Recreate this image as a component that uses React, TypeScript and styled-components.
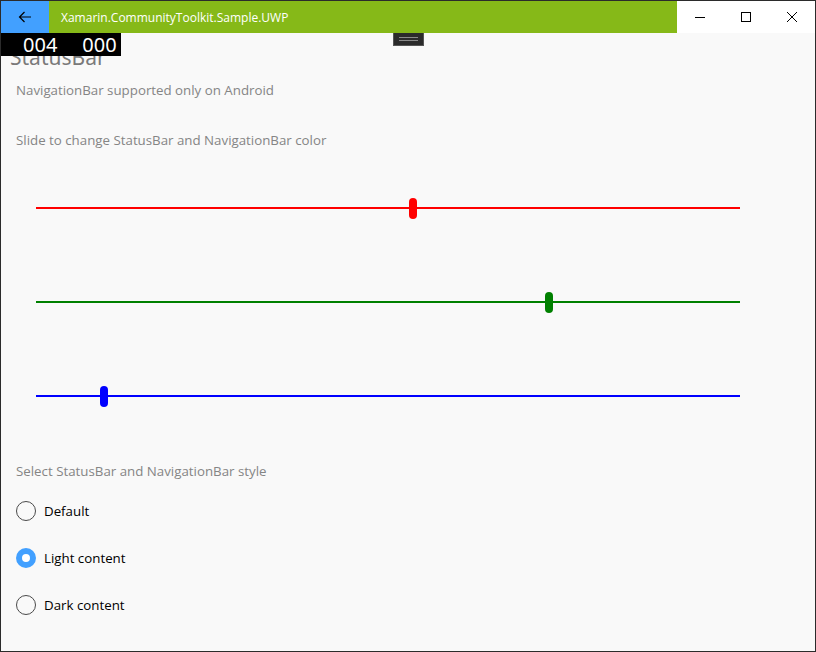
import React from "react";
import styled, { createGlobalStyle } from "styled-components";

const GlobalStyle = createGlobalStyle`
  html, body {
    margin: 0;
    padding: 0;
    background: #2b2b2b;
  }
  * {
    box-sizing: border-box;
  }
`;

const Window = styled.div`
  width: 816px;
  height: 652px;
  border: 1px solid #2b2b2b;
  display: flex;
  flex-direction: column;
  background: #f9f9f9;
  font-family: "Open Sans", "Noto Sans", sans-serif;
  overflow: hidden;
`;

const TitleBar = styled.div`
  height: 32px;
  display: flex;
  flex-shrink: 0;
`;

const BackButton = styled.div`
  width: 48px;
  background: #42a0ff;
  display: flex;
  align-items: center;
  justify-content: center;
`;

const TitleArea = styled.div`
  flex: 1;
  background: #86b918;
  color: #ffffff;
  font-size: 12px;
  display: flex;
  align-items: center;
  padding-left: 12px;
`;

const Controls = styled.div`
  width: 138px;
  background: #ffffff;
  display: flex;
`;

const ControlButton = styled.div`
  width: 46px;
  display: flex;
  align-items: center;
  justify-content: center;
`;

const Content = styled.div`
  position: relative;
  flex: 1;
  padding: 0 15px;
  display: flex;
  flex-direction: column;
`;

const FrameCounter = styled.div`
  position: absolute;
  top: 0;
  left: -1px;
  width: 121px;
  height: 23px;
  background: #000000;
  color: #ffffff;
  font-family: "Noto Sans", sans-serif;
  font-size: 20px;
  line-height: 23px;
  display: flex;
  gap: 25px;
  padding-left: 23px;
  z-index: 2;
`;

const Grabber = styled.div`
  position: absolute;
  top: 0;
  left: 392px;
  width: 31px;
  height: 13px;
  background: #2b2b2b;
  border: 1px solid #555555;
  border-top: none;
  display: flex;
  flex-direction: column;
  justify-content: center;
  gap: 2px;
  padding: 0 5px;

  span {
    display: block;
    height: 1px;
    background: #8a8a8a;
  }
`;

const PageTitle = styled.div`
  margin-left: -6px;
  margin-top: 10px;
  font-size: 21px;
  line-height: 28px;
  color: #7a7a7a;
  font-family: "Noto Sans", sans-serif;
`;

const Caption = styled.div<{ $gap: number }>`
  margin-top: ${(p) => p.$gap}px;
  font-size: 13.3px;
  line-height: 20px;
  color: #858585;
`;

const SliderList = styled.div`
  margin-top: 11px;
  display: flex;
  flex-direction: column;
`;

const SliderRow = styled.div`
  height: 94px;
  display: flex;
  align-items: center;
  padding-left: 20px;
`;

const Track = styled.div<{ $color: string }>`
  position: relative;
  width: 704px;
  height: 2px;
  background: ${(p) => p.$color};
`;

const Thumb = styled.div<{ $color: string }>`
  position: absolute;
  top: -9px;
  width: 8px;
  height: 21px;
  margin-left: -4px;
  border-radius: 4px;
  background: ${(p) => p.$color};
`;

const RadioList = styled.div`
  margin-top: 6px;
  display: flex;
  flex-direction: column;
`;

const RadioRow = styled.div`
  height: 47px;
  display: flex;
  align-items: center;
  gap: 8px;
`;

const RadioCircle = styled.div<{ $checked: boolean }>`
  width: 20px;
  height: 20px;
  border-radius: 50%;
  border: ${(p) => (p.$checked ? "6px solid #42a0ff" : "1.5px solid #4a4a4a")};
  background: ${(p) => (p.$checked ? "#ffffff" : "transparent")};
`;

const RadioLabel = styled.span`
  font-size: 13.3px;
  color: #000000;
`;

const sliders = [
  { color: "#ff0000", value: 0.535 },
  { color: "#008000", value: 0.728 },
  { color: "#0000ff", value: 0.096 },
];

const options = [
  { label: "Default", checked: false },
  { label: "Light content", checked: true },
  { label: "Dark content", checked: false },
];

export default function App() {
  return (
    <>
      <GlobalStyle />
      <Window>
        <TitleBar>
          <BackButton>
            <svg width="14" height="12" viewBox="0 0 14 12">
              <path d="M13 6H1.5M6.5 1L1.5 6l5 5" stroke="#000" strokeWidth="1.2" fill="none" />
            </svg>
          </BackButton>
          <TitleArea>Xamarin.CommunityToolkit.Sample.UWP</TitleArea>
          <Controls>
            <ControlButton>
              <svg width="10" height="10" viewBox="0 0 10 10">
                <path d="M0 5.5h10" stroke="#000" strokeWidth="1" />
              </svg>
            </ControlButton>
            <ControlButton>
              <svg width="10" height="10" viewBox="0 0 10 10">
                <rect x="0.5" y="0.5" width="9" height="9" stroke="#000" strokeWidth="1" fill="none" />
              </svg>
            </ControlButton>
            <ControlButton>
              <svg width="10" height="10" viewBox="0 0 10 10">
                <path d="M0 0l10 10M10 0L0 10" stroke="#000" strokeWidth="1" />
              </svg>
            </ControlButton>
          </Controls>
        </TitleBar>
        <Content>
          <FrameCounter>
            <span>004</span>
            <span>000</span>
          </FrameCounter>
          <Grabber>
            <span />
            <span />
          </Grabber>
          <PageTitle>StatusBar</PageTitle>
          <Caption $gap={9}>NavigationBar supported only on Android</Caption>
          <Caption $gap={30}>Slide to change StatusBar and NavigationBar color</Caption>
          <SliderList>
            {sliders.map((s) => (
              <SliderRow key={s.color}>
                <Track $color={s.color}>
                  <Thumb $color={s.color} style={{ left: `${s.value * 100}%` }} />
                </Track>
              </SliderRow>
            ))}
          </SliderList>
          <Caption $gap={18}>Select StatusBar and NavigationBar style</Caption>
          <RadioList>
            {options.map((o) => (
              <RadioRow key={o.label}>
                <RadioCircle $checked={o.checked} />
                <RadioLabel>{o.label}</RadioLabel>
              </RadioRow>
            ))}
          </RadioList>
        </Content>
      </Window>
    </>
  );
}
